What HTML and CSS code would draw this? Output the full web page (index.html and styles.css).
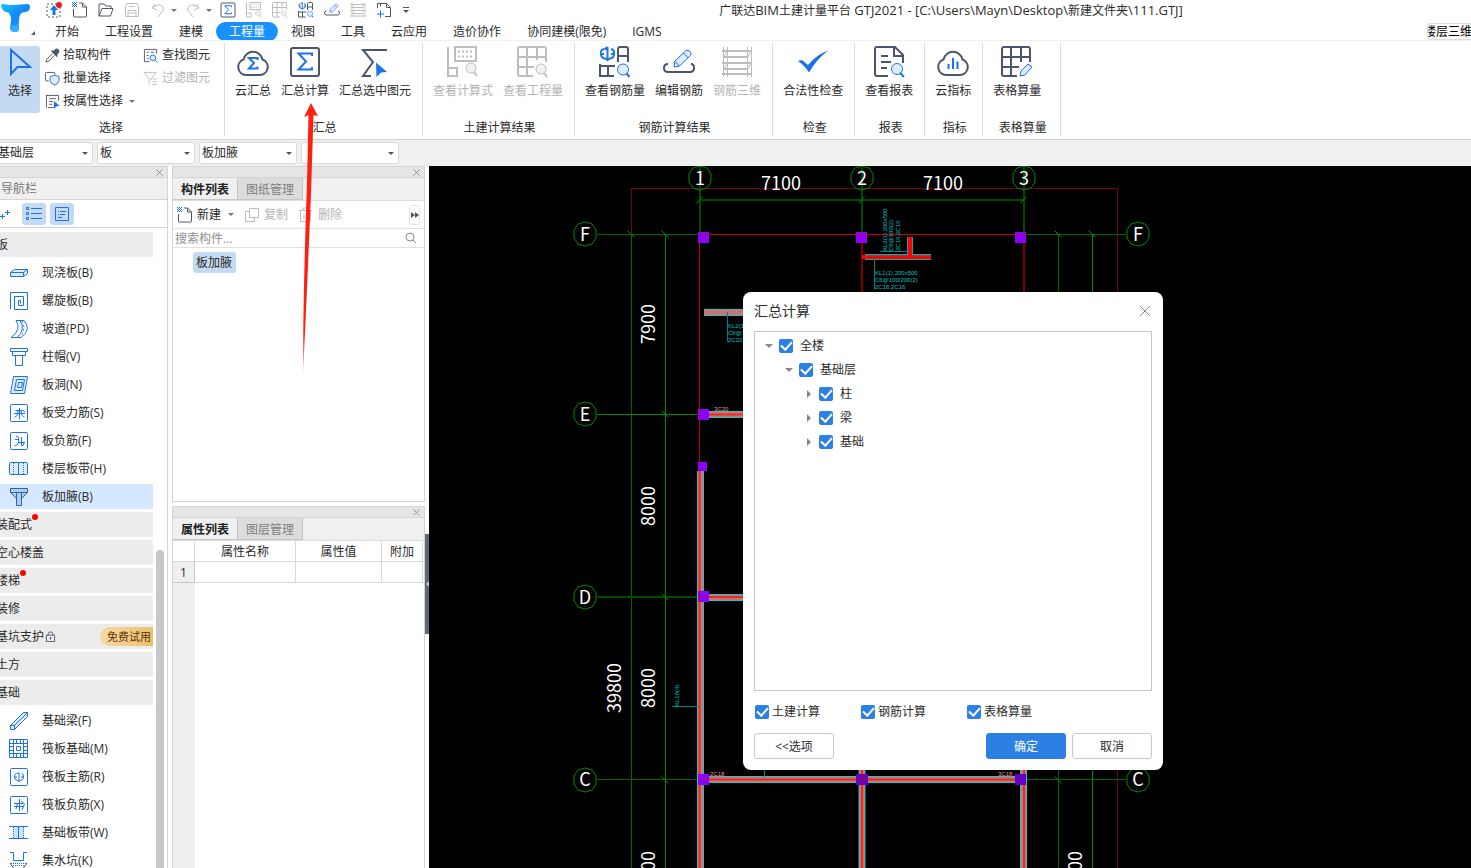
FILE: index.html
```html
<!DOCTYPE html>
<html lang="zh-CN">
<head>
<meta charset="utf-8">
<title>广联达BIM土建计量平台 GTJ2021</title>
<link rel="stylesheet" href="styles.css">
</head>
<body>
<svg class="defs" aria-hidden="true">
  <defs>
    <linearGradient id="logo-fill" x1="0" y1="0" x2="1" y2="1"><stop offset="0" stop-color="#16c4f7"/><stop offset=".5" stop-color="#1286fb"/><stop offset="1" stop-color="#19b4ff"/></linearGradient>
    <linearGradient id="arrow-fade" x1="0" y1="0" x2="0" y2="1"><stop offset="0" stop-color="#ff1f10"/><stop offset=".85" stop-color="#ff1f10"/><stop offset="1" stop-color="#ff1f10" stop-opacity=".2"/></linearGradient>
    <symbol id="lens" viewBox="0 0 12 12"><circle class="tint" cx="5" cy="5" r="4"/><path class="hi w2" d="M8 8l3 3"/></symbol>
    <symbol id="rebar" viewBox="0 0 12 12"><path class="hi" d="M6 1.500v9M3.500 2.500Q1 3 1.500 6H4M1.500 6q0 3 3 3.500M8.500 2.500Q11 3 10.500 6H8M10.500 6q0 3-3 3.500M4 3l2-1.500M4 9l2 1.500 2-1.500"/></symbol>
    <symbol id="new" viewBox="0 0 16 16"><path class="ink" d="M1.500 7v7q0 1 1 1h11q1 0 1-1V5l-4-4H7M10.500 1v4h4"/><path class="hif" d="M0 0h1v1H0zM2 0h1v1H2zM4 0h1v1H4zM1 1h1v1H1zM3 1h1v1H3zM0 2h1v1H0zM2 2h1v1H2zM4 2h1v1H4zM1 3h1v1H1zM3 3h1v1H3zM0 4h1v1H0zM2 4h1v1H2zM4 4h1v1H4z"/></symbol>
    <symbol id="sigma-box" viewBox="0 0 32 32"><rect class="ink w2" x="2" y="2" width="28" height="28" rx="2"/><path class="hi w2" d="M23 10V7.500H9.500L17 15.500 9.500 23.500H23V21"/></symbol>
    <symbol id="calc" viewBox="0 0 32 32"><path class="ink w2" d="M1 1v29h9v-8H1M8 1h21v14H8z"/><path class="ink w2 dash2" d="M11 5.500h16M11 10.500h16"/><circle class="tint" cx="24" cy="22" r="5"/><path class="hi w2" d="M27 26l3 4"/></symbol>
    <symbol id="grid-lens" viewBox="0 0 32 32"><path class="ink w2" d="M16 30H3q-2 0-2-2V3q0-2 2-2h24q2 0 2 2v13M10 1v29M20 1v13M1 11h28M1 21h16"/><circle class="tint" cx="24" cy="23" r="5"/><path class="hi w2" d="M27 27l3 4"/></symbol>
    <symbol id="rebar-lens" viewBox="0 0 32 32"><path class="hi w2" d="M8.500 1v13M5 3Q1 4 2 8h3M2 8q0 4 4 4.500M12 3q4 1 3 5h-3M15 8q0 4-4 4.500M5.500 3.500l3-2.500M5.500 12l3 2 3-2"/><path class="ink w2" d="M19 16V3q0-2 2-2h6q2 0 2 2v13M19 10h10M1 18v12h14M1 20h15M9 20v10"/><circle class="tint" cx="24" cy="23.500" r="5.500"/><path class="hi w2" d="M27.500 27.500l3 3.500"/></symbol>
    <symbol id="edit" viewBox="0 0 32 32"><path class="ink w2" d="M5 18q-4 0-4 4 0 4 4 4h22q4 0 4-4 0-4-3-4"/><path class="tint" d="M11 21l1-6L23 4.500q2-1 4 1t.5 4L16.500 20z"/><path class="hi" d="M20.500 7l5 5M12 15.500l4.500 4.500"/></symbol>
    <symbol id="frame3d" viewBox="0 0 32 32"><path class="ink" d="M2.500 1v30M6.500 1v30M26.500 1v30M30.500 1v30"/><path class="ink w2" d="M1 5h30M1 17h30M1 28h30M3 11h24M3 23h24"/><path class="ink" d="M3 11l3-6M27 11l3-6M3 23l3-6M27 23l3-6"/></symbol>
    <symbol id="sheet" viewBox="0 0 32 32"><path class="ink w2" d="M15 30H4q-2 0-2-2V3q0-2 2-2h18l8 8v8M21 1v9h9M8 10h7M8 16h10M8 22h6"/><circle class="tint" cx="24" cy="23" r="5.500"/><path class="hi w2" d="M27 27l4 4"/></symbol>
    <symbol id="grid-pen" viewBox="0 0 32 32"><path class="ink w2" d="M16 30H3q-2 0-2-2V3q0-2 2-2h24q2 0 2 2v13M10 1v29M20 1v15M1 11h28M1 21h17"/><path class="tint thin" d="M19 30l1-5 7-7 4 3-7 8z"/></symbol>
    <symbol id="cloud" viewBox="0 0 32 32"><path class="ink w2" d="M9 29A8 8 0 0 1 6.500 13.500A9.700 9.700 0 0 1 25.500 13.500A8 8 0 0 1 23 29Z"/></symbol>
    <symbol id="slab-joint" viewBox="0 0 20 20"><rect class="hi" x="1.500" y="1.500" width="17" height="17" rx="1"/></symbol>
  </defs>
</svg>

<header class="top">
  <button class="logo" aria-label="应用菜单">
    <svg width="36" height="38" viewBox="0 0 36 38"><path fill="url(#logo-fill)" d="M1 5q0-1 2-1 5 1 10 1l14-1q3 0 3 3 0 4-4 5-5 0-6 3-1 2-1 5v9q0 3-4 3-5 0-5-4 0-3 1-6 1-4-1-7-1-3-4-3-4-1-5-7z"/><path fill="#4fc0ff" opacity=".5" d="M11 24q5 4 8-2v7q0 3-4 3-5 0-5-4z"/><path fill="#555" d="M35 31v4h-4z"/></svg>
  </button>
  <div class="title-row">
    <div class="quick">
      <button aria-label="升级"><svg viewBox="0 0 16 16"><rect class="ink dash2" x="1" y="2" width="13" height="13"/><path class="hif" d="M8 3l4 5H9.500v5h-3V8H4z"/><circle cx="13" cy="3" r="3" fill="#f01818"/></svg></button>
      <button aria-label="新建"><svg><use href="#new"/></svg></button>
      <button aria-label="打开"><svg viewBox="0 0 16 16"><path class="ink" d="M1 14V2h5l2 2h5v2M1 14L4 6.500h11L12.500 14z"/></svg></button>
      <button class="off" aria-label="保存"><svg viewBox="0 0 16 16"><path class="ink" d="M1.500 4.500q0-3 3-3h7q3 0 3 3v10h-13zM4 14V8.500h8V14M5 11h6M4.500 4.500h6"/></svg></button>
      <button class="off" aria-label="撤销"><svg viewBox="0 0 16 16"><path class="ink" d="M5 2L2 6l5 2M2 6q7-5 10-2t-1 7l-3 4"/></svg></button><i class="caret off"></i>
      <button class="off" aria-label="恢复"><svg viewBox="0 0 16 16"><path class="ink" d="M11 2l3 4-5 2M14 6Q7 1 4 4t1 7l3 4"/></svg></button><i class="caret off"></i>
      <button aria-label="汇总计算"><svg><use href="#sigma-box"/></svg></button>
      <button class="off" aria-label="查看计算式"><svg><use href="#calc"/></svg></button>
      <button class="off" aria-label="查看工程量"><svg><use href="#grid-lens"/></svg></button>
      <button aria-label="查看钢筋量"><svg><use href="#rebar-lens"/></svg></button>
      <button aria-label="编辑钢筋"><svg><use href="#edit"/></svg></button>
      <button class="off" aria-label="钢筋三维"><svg><use href="#frame3d"/></svg></button>
      <button aria-label="添加视口"><svg viewBox="0 0 16 16"><path class="ink" d="M1.500 6V1.500h9l4 4v9H9M10.500 1.500v4h4M4.500 1.500v3"/><path class="hi" d="M1 12h7M4.500 8.500v7"/></svg></button>
      <button class="more" aria-label="更多"><svg viewBox="0 0 8 8"><path class="ink" d="M1 1.500h6"/><path class="inkf" d="M1 4h6L4 7z"/></svg></button>
    </div>
    <h1>广联达<span>BIM</span>土建计量平台<span> GTJ2021 - [C:\Users\Mayn\Desktop\</span>新建文件夹<span>\111.GTJ]</span></h1>
  </div>
  <nav class="tabs">
    <button>开始</button><button>工程设置</button><button>建模</button><button class="on">工程量</button><button>视图</button><button>工具</button><button>云应用</button><button>造价协作</button><button>协同建模(限免)</button><button>IGMS</button>
    <button class="view3d">楼层三维</button>
  </nav>
</header>

<section class="ribbon">
  <div class="group pick">
    <div class="tools">
      <button class="big on"><svg viewBox="0 0 32 32"><path class="hi w2" d="M7 4v24l6.500-7H26z"/></svg>选择</button>
      <div class="smalls">
        <button><svg viewBox="0 0 16 16"><path class="inkf" d="M9 3l2-2q2-1 3.500.5T15 5l-2 2 .5 1.500-1 1-6-6 1-1z"/><path class="ink" d="M8 6l-6 6-1 3 3-1 6-6"/></svg>拾取构件</button>
        <button><svg viewBox="0 0 16 16"><path class="ink" d="M4 10.500H1.500q-1 0-1-1v-7q0-1 1-1h8q1 0 1 1V4"/><path class="tint" d="M5.500 6l5-1.500 4.500 1.500v4q0 3-4.500 5-5-2-5-5z"/></svg>批量选择</button>
        <button><svg viewBox="0 0 16 16"><path class="ink" d="M9 14.500H3M1.500 1v13.500M1 1.500h13.500V7M4.500 5h7M4.500 8h4M4.500 11h3"/><path class="hif" d="M9.500 7.500l6 5-3 .5-3 3z"/></svg>按属性选择<i class="caret"></i></button>
      </div>
      <div class="smalls second">
        <button><svg viewBox="0 0 16 16"><path class="ink" d="M7 14.500H1.500v-13h13V6M4 4.500h2M8 4.500h4M4 8h2M4 11.500h2"/><circle class="tint" cx="10.500" cy="10.500" r="3"/><path class="hi" d="M13 13l2.500 2.500"/></svg>查找图元</button>
        <button class="off" disabled><svg viewBox="0 0 16 16"><path class="ink" d="M6.500 14.500V8L1 1.500h13L9 8v2M10 8.500h5M10 11.500h5M10 14.500h5"/></svg>过滤图元</button>
      </div>
    </div>
    <p>选择</p>
  </div>
  <div class="group">
    <div class="tools">
      <button class="big"><svg viewBox="0 0 32 32"><use href="#cloud"/><path class="hi w2" d="M20.500 14v-2H12l5 5-5 5.500h8.500v-2"/></svg>云汇总</button>
      <button class="big"><svg><use href="#sigma-box"/></svg>汇总计算</button>
      <button class="big"><svg viewBox="0 0 32 32"><path class="ink w2" d="M28 4H4l10 12L4 30h8"/><path class="hif" d="M17 16.500l11 9.500-6 .500-4.500 4.500z"/></svg>汇总选中图元</button>
    </div>
    <p>汇总</p>
  </div>
  <div class="group">
    <div class="tools">
      <button class="big off" disabled><svg><use href="#calc"/></svg>查看计算式</button>
      <button class="big off" disabled><svg><use href="#grid-lens"/></svg>查看工程量</button>
    </div>
    <p>土建计算结果</p>
  </div>
  <div class="group">
    <div class="tools">
      <button class="big"><svg><use href="#rebar-lens"/></svg>查看钢筋量</button>
      <button class="big"><svg><use href="#edit"/></svg>编辑钢筋</button>
      <button class="big off" disabled><svg><use href="#frame3d"/></svg>钢筋三维</button>
    </div>
    <p>钢筋计算结果</p>
  </div>
  <div class="group">
    <div class="tools"><button class="big"><svg viewBox="0 0 32 32"><path class="hif" d="M1 15l4-1 6 5Q19 9 31 4.500 19 14 12 26.500 8 20 1 15z"/></svg>合法性检查</button></div>
    <p>检查</p>
  </div>
  <div class="group">
    <div class="tools"><button class="big"><svg><use href="#sheet"/></svg>查看报表</button></div>
    <p>报表</p>
  </div>
  <div class="group">
    <div class="tools"><button class="big"><svg viewBox="0 0 32 32"><use href="#cloud"/><path class="hi w2" d="M11.500 18v5M16 12v11M20.500 15.500V23"/></svg>云指标</button></div>
    <p>指标</p>
  </div>
  <div class="group last">
    <div class="tools"><button class="big"><svg><use href="#grid-pen"/></svg>表格算量</button></div>
    <p>表格算量</p>
  </div>
</section>

<div class="filters">
  <label class="drop"><select aria-label="楼层"><option>基础层</option></select></label>
  <label class="drop"><select aria-label="构件类别"><option>板</option></select></label>
  <label class="drop"><select aria-label="构件类型"><option>板加腋</option></select></label>
  <label class="drop"><select aria-label="构件名称"><option></option></select></label>
</div>

<main>
  <aside class="nav">
    <div class="strip"><button aria-label="关闭导航栏"><svg viewBox="0 0 8 8"><path class="x" d="M.5.5l7 7M7.500.5l-7 7"/></svg></button></div>
    <h2>导航栏</h2>
    <div class="navbar">
      <button class="plus" aria-label="展开"><svg viewBox="0 0 12 12"><path class="hi" d="M0 8.500h5M2.500 6v5M5 4.500h5M7.500 2v5"/></svg></button>
      <button class="on" aria-label="列表"><svg viewBox="0 0 16 16"><path class="hi" d="M.5 1.500h2v2h-2zM.5 6.500h2v2h-2zM.5 11.500h2v2h-2zM5 2.500h11M5 7.500h11M5 12.500h11"/></svg></button>
      <button class="on" aria-label="卡片"><svg viewBox="0 0 16 16"><path class="hi" d="M1.500 1.500h13v13h-13zM4 5.500h1M6 5.500h6M4 8.500h1M6 8.500h5M4 11.500h4"/></svg></button>
    </div>
    <div class="navbody">
      <div class="list">
        <button class="cat">板</button>
        <button class="item"><svg viewBox="0 0 20 20"><path class="tint" d="M1.500 9.500l4-3h13v4l-4 3h-13zM1.500 9.500h13v4M14.500 9.500l4-3"/></svg>现浇板(B)</button>
        <button class="item"><svg viewBox="0 0 20 20"><path class="hi" d="M1.500 18V1.500h17v17H5.500V5.500h9v9H9.500v-5h2v3"/></svg>螺旋板(B)</button>
        <button class="item"><svg viewBox="0 0 20 20"><path class="hi" d="M7 1.500q6 9-5 17h10q11-8 3-17zM11 1.500q6 9-3 17"/><path class="hi dash2" d="M13 2q4 8-1 15"/></svg>坡道(PD)</button>
        <button class="item"><svg viewBox="0 0 20 20"><path class="hi" d="M1.500 1.500h17v3h-17zM3.500 4.500v4h13v-4M6.500 8.500v10h7v-10"/></svg>柱帽(V)</button>
        <button class="item"><svg viewBox="0 0 20 20"><path class="tint" d="M4.500 1.500h14l-3 17h-14zM7.500 4.500h8l-2 11h-8z"/><path class="hi" d="M9.500 7.500h4l-1 5h-4z"/></svg>板洞(N)</button>
        <button class="item"><svg viewBox="0 0 20 20"><use href="#slab-joint"/><path class="hi" d="M10.500 5v11M5 10.500h11M6.500 7.500h7q2 0 2 1.500M5.500 14q3 0 3.500-6M15.500 14q-3 0-3.500-6"/></svg>板受力筋(S)</button>
        <button class="item"><svg viewBox="0 0 20 20"><use href="#slab-joint"/><path class="hi" d="M7 5q4 1 2.500 3.500H6M9.500 8q1 6-4 7M9 11.500h7M12.500 6v8M12 15q3 0 3-3"/></svg>板负筋(F)</button>
        <button class="item"><svg viewBox="0 0 20 20"><rect class="tint" x=".5" y="3.500" width="18" height="12" rx="1"/><path class="hi" d="M9.500 3.500v12"/><path class="hi dash1" d="M4.500 4v12M14.500 4v12"/></svg>楼层板带(H)</button>
        <button class="item sel"><svg viewBox="0 0 20 20"><path class="tint" d="M1.500 1.500h17v4l-6 6v7h-5v-7l-6-6zM1.500 5.500h17M7.500 6v6M12.500 6v6"/></svg>板加腋(B)</button>
        <button class="cat">装配式<b class="dot"></b></button>
        <button class="cat">空心楼盖</button>
        <button class="cat">楼梯<b class="dot"></b></button>
        <button class="cat">装修</button>
        <button class="cat">基坑支护<svg class="lock" viewBox="0 0 12 12"><path class="ink" d="M1.500 4.500h9v7h-9zM3.500 4.500V3q0-2 2.500-2t2.500 2v1.500M6 7v2.500M5 7.500h2"/></svg><span class="trial">免费试用</span></button>
        <button class="cat">土方</button>
        <button class="cat">基础</button>
        <button class="item"><svg viewBox="0 0 20 20"><path class="tint" d="M1.500 14.500L14.500 1.500h4v4l-13 13h-4zM1.500 14.500h4v4M5.500 14.500l13-13"/></svg>基础梁(F)</button>
        <button class="item"><svg viewBox="0 0 20 20"><path class="hi" d="M.5.5h18v18H.5zM.5 4.500h18M.5 14.500h18M4.500.5v18M14.500.5v18M7.500 7.500h4v4h-4zM.5 7.500h4M.5 11.500h4M14.500 7.500h4M14.500 11.500h4M7.500.5v4M11.500.5v4M7.500 14.500v4M11.500 14.500v4"/></svg>筏板基础(M)</button>
        <button class="item"><svg viewBox="0 0 20 20"><use href="#slab-joint"/><use href="#rebar" x="4" y="4" width="12" height="12"/></svg>筏板主筋(R)</button>
        <button class="item"><svg viewBox="0 0 20 20"><use href="#slab-joint"/><path class="hi" d="M10.500 4v12M5 11.500h10M5 8.500h9M12 6l3.500 3-2.500 6M8 8v3l-1 3"/></svg>筏板负筋(X)</button>
        <button class="item"><svg viewBox="0 0 20 20"><path fill="#cfe2fa" d="M4 4h11v12H4z"/><path class="hi" d="M0 3.500h19M0 15.500h19M9.500 3.500v12"/><path class="hi dash1" d="M4.500 4v12M14.500 4v12"/></svg>基础板带(W)</button>
        <button class="item"><svg viewBox="0 0 20 20"><path class="hi" d="M1 1.500h3.500v8h10v-8H18"/><path class="hi dash1" d="M2 12.500h16M4 14.500h12"/><path class="ink" d="M1 12l4 5.500h9l4-5.500"/></svg>集水坑(K)</button>
      </div>
      <div class="scroll"><i></i></div>
    </div>
  </aside>

  <div class="panels">
    <section class="panel parts">
      <div class="strip"><button aria-label="关闭构件列表"><svg viewBox="0 0 8 8"><path class="x" d="M.5.5l7 7M7.500.5l-7 7"/></svg></button></div>
      <div class="ptabs"><button class="on">构件列表</button><button>图纸管理</button></div>
      <div class="actions">
        <button><svg><use href="#new"/></svg>新建<i class="caret"></i></button>
        <button class="off" disabled><svg viewBox="0 0 16 16"><path class="ink" d="M5.500 1.500h9v9h-9zM5 4.500H1.500v10h9V11"/></svg>复制</button>
        <button class="off" disabled><svg viewBox="0 0 16 16"><path class="ink" d="M1 3.500h13M5 3V1h5v2M2.500 4v10.500h10V4M6 7v5M9 7v5"/></svg>删除</button>
        <button class="expand" aria-label="更多操作"><svg viewBox="0 0 8 8"><path class="inkf" d="M0 1l4 3-4 3zM4 1l4 3-4 3z"/></svg></button>
      </div>
      <label class="search"><input type="text" placeholder="搜索构件..." aria-label="搜索构件"><svg viewBox="0 0 12 12"><circle class="x" cx="5" cy="5" r="4"/><path class="x" d="M8 8l3 3"/></svg></label>
      <div class="tree"><button>板加腋</button></div>
    </section>
    <section class="panel props">
      <div class="strip"><button aria-label="关闭属性列表"><svg viewBox="0 0 8 8"><path class="x" d="M.5.5l7 7M7.500.5l-7 7"/></svg></button></div>
      <div class="ptabs"><button class="on">属性列表</button><button>图层管理</button></div>
      <div class="sheet">
        <table>
          <colgroup><col class="c0"><col class="c1"><col class="c2"><col class="c3"></colgroup>
          <tr><th></th><th>属性名称</th><th>属性值</th><th>附加</th></tr>
          <tr><th class="n" scope="row">1</th><td></td><td></td><td></td></tr>
        </table>
      </div>
    </section>
  </div>
  <button class="splitter" aria-label="折叠面板"></button>

  <section class="canvas">
    <svg class="cad" viewBox="429 166 1042 702" preserveAspectRatio="xMinYMin slice" role="img" aria-label="轴网平面图">
      <defs>
        <polygon id="bubble" class="g2" points="0,-12 7,-10 11,-4 11,4 7,10 0,12 -7,10 -11,4 -11,-4 -7,-10"/>
        <path id="tk" class="g2" d="M-3.500-3.500l7 7"/>
      </defs>
      <path class="r1" d="M631.500 234V188.500H1117.500V868"/>
      <path class="g1" d="M631.500 234V868M1058.500 234V868M597 779.500H699M1026 779.500H1126M597 234.500H699M1024 234.500H1126"/>
      <path class="g2" d="M665.500 234V868M1092.500 234V868M597 414.500H699"/>
      <path class="g0" d="M700 166V234M862 166V234M1024 166V234M700 200H1024M597 597H699"/>
      <use href="#bubble" x="700" y="178"/><use href="#bubble" x="862" y="178"/><use href="#bubble" x="1024" y="178"/>
      <use href="#bubble" x="585" y="234"/><use href="#bubble" x="585" y="414"/><use href="#bubble" x="585" y="597"/><use href="#bubble" x="585" y="780"/>
      <use href="#bubble" x="1138" y="234"/><use href="#bubble" x="1138" y="780"/>
      <use href="#tk" x="631" y="234"/><use href="#tk" x="665" y="234"/><use href="#tk" x="665" y="414"/><use href="#tk" x="665" y="597"/><use href="#tk" x="665" y="780"/><use href="#tk" x="1058" y="234"/><use href="#tk" x="1092" y="234"/><use href="#tk" x="1058" y="780"/>
      <path class="g2" d="M696.500 203.500l6-7M858.500 203.500l6-7M1020.500 203.500l6-7"/>
      <path class="r2" d="M699.500 234V467M699 234.500H1020"/>
      <path class="r0" d="M862 240V300M1024 240V300"/>
      <!-- beams -->
      <g class="beam">
        <path class="cy" d="M700.500 471V868M862 765V868M1023.500 765V868M709 779.500H1015M709 597.500H745M709 414.500H745M704 312.500H745"/>
        <path class="sa" d="M700.500 471V868M862 765V868M1023.500 765V868M709 779.500H1015M709 597.500H745M709 414.500H745M704 312.500H745"/>
        <path class="rd" d="M699.500 471V868M862 765V868M1024 765V868M709 779.500H1015M709 597H745M709 414.500H745"/>
      </g>
      <path fill="#16a8a8" d="M865 254h66v6h-66zM907 237h6v18h-6z"/><path fill="#f00" d="M862 255h69v4h-69zM908 237h4v20h-4z"/><path fill="#a34" d="M866 255h42v1h-42zM912 255h19v1h-19z"/>
      <g fill="#8c00ff"><path d="M698 232h11v11h-11zM856 232h11v11h-11zM1015 232h11v11h-11zM698 409h11v11h-11zM698 462h9v9h-9zM698 591h11v11h-11zM698 774h11v11h-11z"/><path fill="#6400c4" d="M856 774h12v11h-12zM1015 774h11v11h-11z"/></g>
      <path class="r2" opacity=".6" d="M698 234.500H1026M699.500 409V420M699.500 591V602M698 597.500H709M698 779.500H709M856 779.500H868M862.500 774V785"/>
      <path class="te" d="M874.500 258V289M880 251.500H909M727.500 312V342M672 706.500H699M764.500 765V777"/>
      <g class="mini">
        <text x="875" y="275">KL1(1) 200x500</text><text x="875" y="282">C6@100/200(2)</text><text x="875" y="289">2C16;2C16</text>
        <text x="728" y="328">KL2(1) 200x500</text><text x="728" y="335">C8@100(2)</text><text x="728" y="342">2C22;2C22</text>
        <text transform="translate(887 251) rotate(-90)">KL9(1) 200x500</text><text transform="translate(893 251) rotate(-90)">C8@100(2)</text><text transform="translate(900 251) rotate(-90)">2C16;2C16</text>
        <text transform="translate(679 706) rotate(-90)">KL10(4)</text>
        <g class="pink"><text x="714" y="411">3C20</text><text x="710" y="776">2C18</text><text x="998" y="776">3C18</text></g>
      </g>
      <g class="dim">
        <text x="781" y="190">7100</text><text x="943" y="190">7100</text>
        <text x="700" y="185">1</text><text x="862" y="185">2</text><text x="1024" y="185">3</text>
        <text x="585" y="241">F</text><text x="585" y="421">E</text><text x="585" y="604">D</text><text x="585" y="786">C</text><text x="1138" y="241">F</text><text x="1138" y="786">C</text>
        <text transform="translate(655 324) rotate(-90)">7900</text><text transform="translate(655 506) rotate(-90)">8000</text><text transform="translate(655 688) rotate(-90)">8000</text><text transform="translate(621 688) rotate(-90)">39800</text><text transform="translate(655 871) rotate(-90)">8000</text><text transform="translate(1082 871) rotate(-90)">8000</text>
      </g>
    </svg>

    <form class="dialog" role="dialog" aria-labelledby="dlg-title">
      <div class="dhead"><h2 id="dlg-title">汇总计算</h2><button type="button" aria-label="关闭"><svg viewBox="0 0 12 12"><path class="x" d="M1 1l10 10M11 1L1 11"/></svg></button></div>
      <ul class="dtree">
        <li><div class="node"><i class="open"></i><label><input type="checkbox" checked>全楼</label></div>
          <ul><li><div class="node"><i class="open"></i><label><input type="checkbox" checked>基础层</label></div>
            <ul>
              <li><div class="node"><i class="shut"></i><label><input type="checkbox" checked>柱</label></div></li>
              <li><div class="node"><i class="shut"></i><label><input type="checkbox" checked>梁</label></div></li>
              <li><div class="node"><i class="shut"></i><label><input type="checkbox" checked>基础</label></div></li>
            </ul></li></ul></li>
      </ul>
      <div class="opts"><label><input type="checkbox" checked>土建计算</label><label><input type="checkbox" checked>钢筋计算</label><label><input type="checkbox" checked>表格算量</label></div>
      <div class="btns"><button type="button" class="opt">&lt;&lt;选项</button><button type="submit" class="ok">确定</button><button type="button">取消</button></div>
    </form>
  </section>
</main>

<svg class="pointer" viewBox="0 0 16 274" aria-hidden="true"><path fill="url(#arrow-fade)" d="M10 0L17 13L12.500 12L10 90Q6 190 2 272Q2 190 6 80L7.500 12L3 14z"/></svg>
</body>
</html>
```
FILE: styles.css
```css
:root {
  --ink: #4c566a;
  --hi: #1a73e8;
  --soft: #dfecfc;
  --line: #d4d4d4;
  --pick: #c4daf2;
}
* { box-sizing: border-box; }
body {
  margin: 0;
  height: 100vh;
  overflow: hidden;
  display: flex;
  flex-direction: column;
  position: relative;
  background: #fff;
  color: #2b2b2b;
  font: 12px/16px "Open Sans", "Noto Sans CJK SC", sans-serif;
}
button, input, select { font: inherit; color: inherit; }
button { border: 0; background: none; padding: 0; white-space: nowrap; }
h1, h2, p, ul { margin: 0; padding: 0; font-size: 12px; font-weight: 400; list-style: none; }
svg { display: block; flex: none; }
.defs { position: absolute; width: 0; height: 0; }

.ink, .hi, .tint, .x { fill: none; stroke-width: 1; }
.ink { stroke: var(--ink); }
.hi { stroke: var(--hi); }
.tint { stroke: var(--hi); fill: var(--soft); }
.x { stroke: #888; }
.inkf { fill: var(--ink); }
.hif { fill: var(--hi); }
.w2 { stroke-width: 2; }
.big .tint { stroke-width: 2; }
.dash1 { stroke-dasharray: 1 1; }
.dash2 { stroke-dasharray: 2 2; }
.off { --ink: #bdbdbd; --hi: #bdbdbd; --soft: #f2f2f2; color: #b4b4b4; }
.caret { display: block; width: 5px; border: solid transparent; border-width: 3px 3px 0; border-top-color: #777; flex: none; }

.top { display: grid; grid-template: 20px 20px / 41px 1fr; border-bottom: 1px solid #f0f0f0; flex: none; }
.logo { grid-row: 1 / 3; align-self: start; }
.title-row { display: flex; align-items: center; }
.quick { display: flex; align-items: center; }
.quick button { width: 26px; height: 20px; display: grid; place-items: center; }
.quick svg { width: 16px; height: 16px; }
.quick .caret { margin-right: 3px; }
.quick .more { width: 18px; }
.quick .more svg { width: 8px; height: 8px; }
.title-row h1 { flex: 1; text-align: center; padding-left: 16px; line-height: 20px; padding-top: 1px; white-space: nowrap; }
.title-row span { font-size: 13px; white-space: pre; }
.tabs { display: flex; align-items: center; padding-top: 2px; padding-left: 1px; overflow: hidden; }
.tabs button { padding: 0 13px; height: 19px; line-height: 20px; border-radius: 10px; flex: none; }
.tabs .on { background: #1890ff; color: #fff; }
.tabs .view3d { margin-left: auto; width: 44px; padding: 0; border: 1px solid #ddd; border-right: 0; border-radius: 3px 0 0 3px; overflow: hidden; text-align: left; text-indent: -4px; color: #000; height: 17px; line-height: 15px; }

.ribbon { display: flex; flex: none; height: 99px; border-bottom: 1px solid var(--line); padding: 2px 0 3px; }
.group { display: flex; flex-direction: column; justify-content: space-between; border-right: 1px solid #dcdcdc; padding: 3px 10px 0 10px; }
.group p { text-align: center; line-height: 17px; padding-left: 2px; }
.tools { display: flex; gap: 10px; align-items: flex-start; padding-right: 1px; }
.big { display: flex; flex-direction: column; align-items: center; height: 67px; line-height: 18px; gap: 4px; }
.big svg { width: 32px; height: 32px; }
.big .thin { stroke-width: 1; }
.group.last { min-width: 78px; }
.pick { width: 225px; padding-left: 0; padding-right: 0; }
.pick p { padding-right: 4px; }
.pick .tools { gap: 5px; }
.pick .big { width: 40px; background: var(--pick); border-radius: 0 3px 3px 0; }
.smalls { display: flex; flex-direction: column; gap: 5px; width: 93px; }
.smalls button { display: flex; align-items: center; gap: 3px; height: 18px; line-height: 18px; }
.smalls svg { width: 15px; height: 15px; }
.smalls .caret { margin-left: 3px; }
.second { width: 72px; }
.second button { gap: 4px; }

.filters { display: flex; gap: 4px; flex: none; height: 26px; padding: 2px 0; background: #f0f0f0; }
.drop { display: grid; width: 98px; height: 22px; align-items: center; }
.drop:first-child { margin-left: -5px; }
.drop::after { content: ""; grid-area: 1 / 1; justify-self: end; margin-right: 5px; border: solid transparent; border-width: 3px 3px 0; border-top-color: var(--ink); pointer-events: none; }
.drop select { grid-area: 1 / 1; appearance: none; width: 100%; height: 22px; padding: 0 2px; border: 1px solid #d9d9d9; border-radius: 3px; background: #fff; }

main { flex: 1; min-height: 0; display: grid; grid-template-columns: 168px 257px 4px 1fr; }
.strip { height: 12px; flex: none; background: #e6e6e6; border: solid var(--line); border-width: 1px 0; display: flex; justify-content: flex-end; align-items: center; padding-right: 4px; }
.strip svg { width: 7px; height: 7px; }
.nav { display: flex; flex-direction: column; min-height: 0; border-right: 1px solid var(--line); }
.nav h2 { height: 22px; line-height: 22px; padding-left: 1px; background: #f0f0f0; color: #777; border-bottom: 1px solid var(--line); }
.navbar { display: flex; align-items: center; gap: 4px; height: 28px; border-bottom: 1px solid var(--line); flex: none; }
.navbar button { width: 24px; height: 22px; border-radius: 3px; display: grid; place-items: center; }
.navbar .on { background: var(--pick); }
.navbar svg { width: 16px; height: 16px; }
.navbar .plus { width: 18px; justify-items: start; }
.navbar .plus svg { width: 12px; height: 12px; }
.navbody { flex: 1; min-height: 0; display: grid; grid-template-columns: 153px 1fr; padding-top: 4px; }
.list { overflow: hidden; display: flex; flex-direction: column; gap: 3px; }
.list button { flex: none; height: 25px; display: flex; align-items: center; text-align: left; }
.cat { background: #ececec; }
.list .cat { margin-left: -4px; }
.item { padding-left: 9px; gap: 13px; }
.item svg { width: 20px; height: 20px; }
.item.sel { background: #d4e8ff; --hi: #34618f; --soft: #a9cdf6; }
.dot { width: 6px; height: 6px; border-radius: 3px; background: #f00; align-self: flex-start; margin-top: 2px; }
.lock { width: 11px; height: 11px; margin-left: 1px; }
.trial { margin-left: auto; height: 19px; line-height: 19px; width: 53px; padding-left: 7px; font-size: 11px; overflow: hidden; color: #5c3508; border-radius: 10px 0 0 10px; background: linear-gradient(90deg, #f6d9a8, #edc069); }
.scroll { display: flex; align-items: flex-end; padding-left: 3px; }
.scroll i { width: 8px; height: 50%; border-radius: 4px 4px 0 0; background: #c8c8c8; }

.panels { display: grid; grid-template-rows: 336px 1fr; gap: 4px; padding-left: 4px; min-height: 0; }
.panel { border: 1px solid var(--line); border-top: 0; display: flex; flex-direction: column; min-height: 0; }
.ptabs { display: flex; flex: none; height: 23px; background: #f0f0f0; border-bottom: 1px solid #ddd; }
.ptabs button { width: 65px; padding-top: 2px; background: #dcdcdc; color: #808080; border: 1px solid #c4c6ca; border-width: 0 1px 1px 0; }
.ptabs .on { background: #f0f0f0; color: #222; font-weight: 700; }
.actions { display: flex; align-items: center; gap: 10px; height: 28px; padding: 0 4px 0 4px; border-bottom: 1px solid #e0e0e0; flex: none; line-height: 18px; }
.actions button { display: flex; align-items: center; gap: 4px; }
.actions svg { width: 16px; height: 16px; }
.actions .caret { margin-left: 3px; }
.actions .expand { margin-left: auto; border: 1px solid #e4e4e4; border-radius: 3px; width: 11px; height: 20px; justify-content: center; }
.actions .expand svg { width: 8px; height: 8px; }
.search { display: flex; align-items: center; height: 19px; padding: 0 7px 0 2px; border-bottom: 1px solid #e0e0e0; flex: none; }
.search input { flex: 1; min-width: 0; border: 0; padding: 0; outline: 0; height: 18px; background: none; }
.search input::placeholder { color: #909090; }
.search svg { width: 12px; height: 12px; }
.tree { padding: 4px 0 0 20px; }
.tree button { height: 21px; padding: 0 4px 0 3px; border-radius: 3px; background: var(--pick); }
.props { border-bottom: 0; }
.sheet { flex: 1; background: linear-gradient(90deg, #efefef 22px, #fff 22px); }
table { border-collapse: separate; border-spacing: 0; table-layout: fixed; width: 250px; background: #fff; }
th, td { height: 21px; padding: 2px 0 0; font-weight: 400; line-height: 18px; border: solid #d8d8d8; border-width: 0 1px 1px 0; }
th.n { background: #efefef; border-color: #c8c8c8; }
.c0 { width: 22px; } .c1 { width: 101px; } .c2 { width: 86px; } .c3 { width: 41px; }
.splitter { align-self: start; margin-top: 368px; height: 100px; background: #5d6775; display: flex; align-items: center; }
.splitter::before { content: ""; border: solid transparent; border-width: 3px 3px 3px 0; border-right-color: #c4c9d0; margin-left: 1px; }

.canvas { position: relative; min-height: 0; min-width: 0; overflow: hidden; background: #000; }
.cad { width: 100%; height: 100%; }
.cad path, .cad polygon { stroke-width: 1; }
.g0, .g1, .g2, .r0, .r1, .r2, .te, .beam path { fill: none; }
.cad .g0 { stroke: #004a00; stroke-width: 2; }
.g1 { stroke: #006400; }
.g2 { stroke: #008a00; }
.cad .r0 { stroke: #800000; stroke-width: 2; }
.r1 { stroke: #780000; }
.r2 { stroke: #cc0000; }
.te { stroke: #008080; }
.cad .beam .cy { stroke: #14cccc; stroke-width: 7px; }
.cad .beam .sa { stroke: #d07070; stroke-width: 5px; }
.cad .beam .rd { stroke: #f62626; stroke-width: 2px; }
.mini { font: 6px "Liberation Sans Narrow", "Liberation Sans", sans-serif; fill: #00c0c0; }
.pink { fill: #ff8c8c; }
.dim { font: 18px "Noto Sans CJK SC", sans-serif; fill: #fff; text-anchor: middle; }

.dialog { position: absolute; left: 314px; top: 126px; width: 420px; padding: 0 11px 11px; background: #fff; border-radius: 8px; display: flex; flex-direction: column; }
.dhead { height: 39px; display: flex; align-items: center; justify-content: space-between; padding: 0 1px 2px 0; }
.dhead h2 { font-size: 14px; line-height: 20px; }
.dhead svg { width: 12px; height: 12px; }
.dtree { height: 360px; border: 1px solid #c6c6c6; padding: 2px 0 0 10px; }
.dtree ul { padding-left: 20px; }
.node { display: flex; align-items: center; height: 24px; }
.node i { width: 7px; margin-right: 7px; }
.node i::before { content: ""; display: block; width: 0; border: solid transparent; }
.node .open::before { border-width: 4px 4px 0; border-top-color: #888; }
.node .shut::before { margin-left: 2px; border-width: 4px 0 4px 4px; border-left-color: #888; }
.dialog label { display: flex; align-items: center; gap: 7px; line-height: 18px; }
.dialog input { appearance: none; width: 14px; height: 14px; margin: 0; border-radius: 2px; background: #2c80e4; display: grid; place-items: center; }
.dialog input:checked::before { content: ""; width: 5px; height: 9px; margin-bottom: 3px; border: solid #fff; border-width: 0 2px 2px 0; transform: rotate(42deg); }
.opts { display: grid; grid-template-columns: 106px 106px 106px; height: 42px; padding-left: 1px; }
.opts label { gap: 3px; }
.btns { display: flex; gap: 6px; }
.btns button { width: 80px; height: 26px; padding-top: 1px; border: 1px solid #c8c8c8; border-radius: 3px; background: #fff; }
.btns .opt { margin-right: auto; }
.btns .ok { background: #2c80e4; border-color: #2c80e4; color: #fff; }

.pointer { position: absolute; left: 301px; top: 103px; width: 16px; height: 274px; overflow: visible; pointer-events: none; }
```
